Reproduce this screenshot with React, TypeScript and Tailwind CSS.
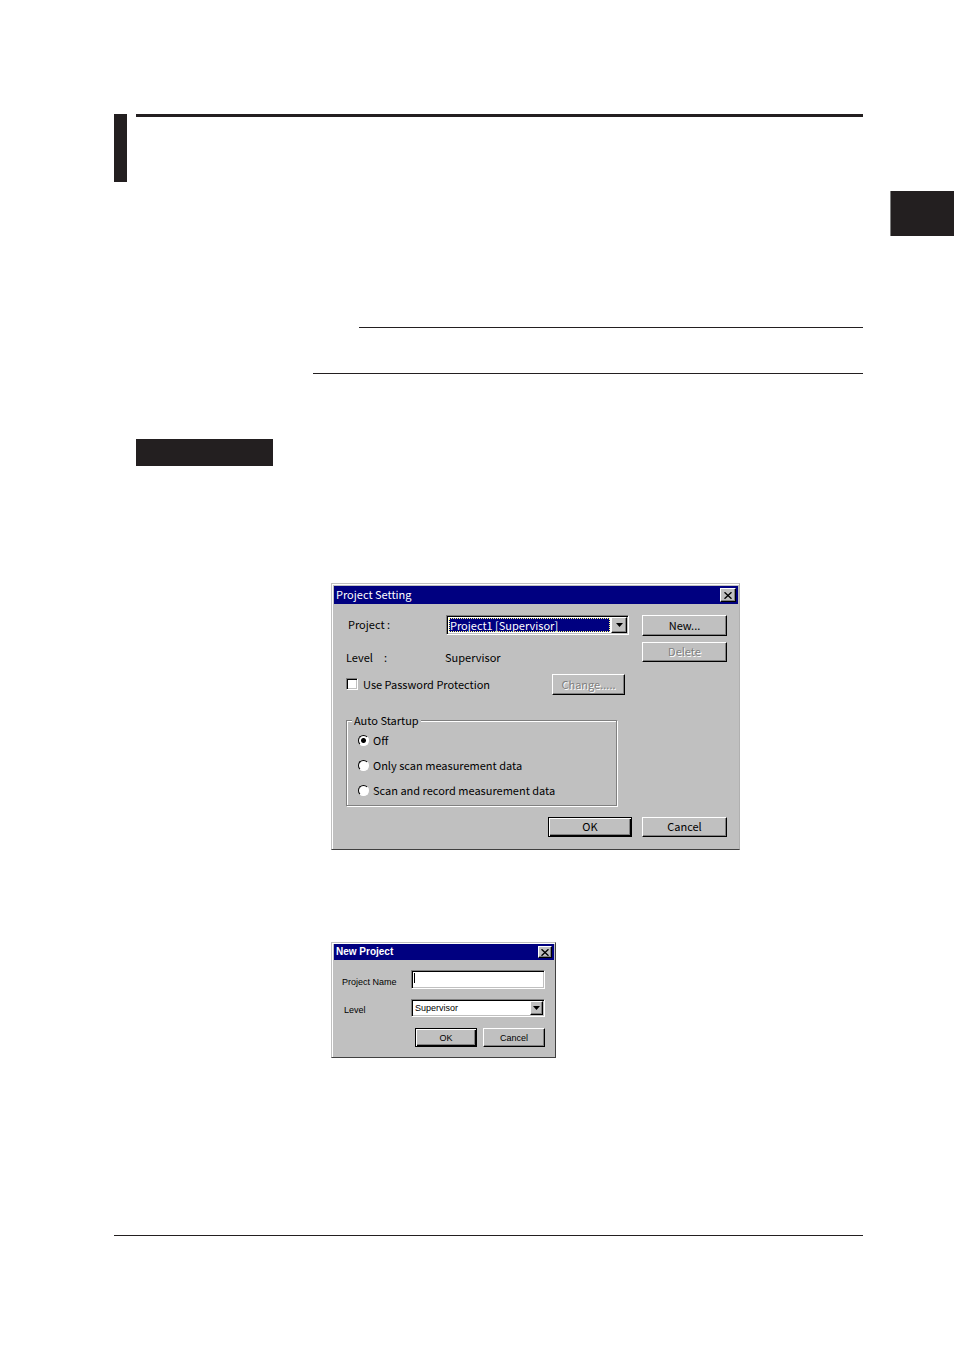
import { useState } from "react";
import type { ReactNode } from "react";
import clsx from "clsx";

type ButtonProps = {
  children: ReactNode;
  isDefault?: boolean;
  disabled?: boolean;
  className?: string;
};

// classic beveled push button
function PushButton({ children, isDefault, disabled, className }: ButtonProps) {
  return (
    <button
      type="button"
      disabled={disabled}
      className={clsx(
        "flex items-center justify-center border bg-[#c0c0c0]",
        isDefault
          ? "border-black shadow-[inset_1px_1px_0_#fff,inset_-1px_-1px_0_#000,inset_-2px_-2px_0_#808080]"
          : "border-t-white border-l-white border-r-black border-b-black shadow-[inset_-1px_-1px_0_#808080]",
        disabled && "text-[#808080] [text-shadow:1px_1px_0_#fff]",
        className
      )}
    >
      {children}
    </button>
  );
}

function TitleBar({ title, small }: { title: string; small?: boolean }) {
  return (
    <header
      className={clsx(
        "flex items-center justify-between bg-[#000080] pl-0.5 text-white",
        small ? "h-4 pr-0.5 text-[10px] font-bold" : "h-[18px] pr-0.5"
      )}
    >
      <h2 className={small ? "" : "pb-0.5"}>{title}</h2>
      <button
        type="button"
        aria-label="Close"
        className={clsx(
          "flex items-center justify-center border border-t-white border-l-white border-r-black border-b-black bg-[#c0c0c0] shadow-[inset_-1px_-1px_0_#808080]",
          small ? "h-3 w-3.5" : "h-3.5 w-4"
        )}
      >
        <svg viewBox="0 0 8 7" className="h-[7px] w-2" stroke="#000" strokeWidth="1.4" fill="none">
          <path d="M0.5 0.3 L7.5 6.7 M7.5 0.3 L0.5 6.7" />
        </svg>
      </button>
    </header>
  );
}

type SelectProps = {
  id: string;
  options: string[];
  focused?: boolean;
  className?: string;
};

function SelectBox({ id, options, focused, className }: SelectProps) {
  return (
    <div
      className={clsx(
        "flex border border-t-[#808080] border-l-[#808080] border-r-white border-b-white bg-white p-px shadow-[inset_1px_1px_0_#000,inset_-1px_-1px_0_#c0c0c0]",
        className
      )}
    >
      <select
        id={id}
        className={clsx(
          "min-w-0 flex-1 appearance-none",
          focused
            ? "bg-[#000080] pl-0.5 text-white shadow-[inset_0_0_0_1px_#fff] outline-1 -outline-offset-2 outline-dotted outline-[#ffff80]"
            : "bg-white pl-0.5 outline-none"
        )}
      >
        {options.map((o) => (
          <option key={o}>{o}</option>
        ))}
      </select>
      <span
        className={clsx(
          "pointer-events-none flex items-center justify-center border border-t-white border-l-white border-r-black border-b-black bg-[#c0c0c0] shadow-[inset_-1px_-1px_0_#808080]",
          focused ? "w-4" : "w-[13px]"
        )}
      >
        <svg viewBox="0 0 7 4" className="h-1 w-[7px]">
          <path d="M0 0 H7 L3.5 4 Z" fill="#000" />
        </svg>
      </span>
    </div>
  );
}

const startupModes = ["Off", "Only scan measurement data", "Scan and record measurement data"];

function ProjectSetting() {
  const [mode, setMode] = useState(startupModes[0]);
  const [usePassword, setUsePassword] = useState(false);

  return (
    <section className="w-[409px] border border-t-[#c0c0c0] border-r-[#b0b0b0] border-b-[#404040] border-l-[#c0c0c0] bg-[#c0c0c0] pt-0.5 pr-px pb-3 pl-0.5 font-['Noto_Sans_CJK_JP','Liberation_Sans',sans-serif] text-[11px] leading-4 shadow-[inset_1px_1px_0_#fff]">
      <TitleBar title="Project Setting" />

      <div className="flex justify-between pt-[11px] pr-[11px] pl-3">
        <div>
          <div className="flex h-5 items-center">
            <label htmlFor="project" className="w-[100px] pb-0.5 pl-0.5">Project :</label>
            <SelectBox id="project" options={["Project1 [Supervisor]"]} focused className="h-5 w-[183px]" />
          </div>
          <div className="mt-[14px] flex h-4">
            <span className="w-[38px]">Level</span>
            <span className="w-[61px]">:</span>
            <span>Supervisor</span>
          </div>
          <div className="mt-[9px] flex h-[21px] items-center justify-between pr-1">
            <label className="flex items-center gap-[5px] pb-0.5">
              <input
                type="checkbox"
                checked={usePassword}
                onChange={(e) => setUsePassword(e.target.checked)}
                className="size-3 appearance-none border border-t-[#808080] border-l-[#808080] border-r-white border-b-white bg-white shadow-[inset_1px_1px_0_#000,inset_-1px_-1px_0_#c0c0c0] checked:bg-black"
              />
              Use Password Protection
            </label>
            <PushButton disabled className="h-[21px] w-[73px] pb-0.5">Change.....</PushButton>
          </div>
        </div>
        <div className="flex flex-col gap-1.5">
          <PushButton className="h-[21px] w-[85px] pb-0.5">New...</PushButton>
          <PushButton disabled className="h-5 w-[85px] pb-0.5">Delete</PushButton>
        </div>
      </div>

      <fieldset className="mt-[17px] ml-3 h-[94px] w-[271px] border border-[#808080] pl-[11px] shadow-[1px_1px_0_#fff,inset_1px_1px_0_#fff]">
        <legend className="-ml-1.5 bg-[#c0c0c0] px-0.5">Auto Startup</legend>
        <div className="flex flex-col gap-[9px] pt-1">
          {startupModes.map((m) => (
            <label key={m} className="flex h-4 items-center gap-1">
              <input
                type="radio"
                name="startup"
                checked={mode === m}
                onChange={() => setMode(m)}
                className="size-[11px] appearance-none rounded-full border border-t-black border-l-black border-r-white border-b-white bg-white checked:bg-[radial-gradient(circle,#000_2px,#fff_3px)]"
              />
              {m}
            </label>
          ))}
        </div>
      </fieldset>

      <div className="mt-[11px] flex justify-end gap-2.5 pr-[11px]">
        <PushButton isDefault className="h-5 w-[84px] pb-0.5">OK</PushButton>
        <PushButton className="h-5 w-[85px] pb-0.5">Cancel</PushButton>
      </div>
    </section>
  );
}

function NewProject() {
  const [name, setName] = useState("");

  return (
    <section className="w-[225px] border border-t-[#c0c0c0] border-r-[#404040] border-b-[#404040] border-l-[#c0c0c0] bg-[#c0c0c0] pt-px pr-px pb-2.5 pl-0.5 font-['Liberation_Sans',sans-serif] text-[9px] leading-3 shadow-[inset_1px_1px_0_#fff]">
      <TitleBar title="New Project" small />

      <div className="flex flex-col pt-[10px] pr-[9px] pl-2">
        <div className="flex items-center justify-between">
          <label htmlFor="project-name" className="pt-1">Project Name</label>
          <div className="relative h-[19px] w-[134px]">
            <input
              id="project-name"
              type="text"
              value={name}
              onChange={(e) => setName(e.target.value)}
              className="size-full border border-t-[#808080] border-l-[#808080] border-r-white border-b-white bg-white pl-0.5 shadow-[inset_1px_1px_0_#000,inset_-1px_-1px_0_#c0c0c0] outline-none"
            />
            {/* resting caret */}
            {name === "" && <span className="pointer-events-none absolute top-[3px] left-[3px] h-2.5 w-px bg-black" />}
          </div>
        </div>
        <div className="mt-2.5 flex items-center justify-between pl-0.5">
          <label htmlFor="level" className="pt-1">Level</label>
          <SelectBox id="level" options={["Supervisor"]} className="h-[18px] w-[134px]" />
        </div>
        <div className="mt-[11px] flex justify-end gap-1.5">
          <PushButton isDefault className="h-[19px] w-[62px]">OK</PushButton>
          <PushButton className="h-[19px] w-[62px]">Cancel</PushButton>
        </div>
      </div>
    </section>
  );
}

export default function App() {
  return (
    <main className="min-h-screen bg-white pt-[114px] pb-[114px] pl-[114px] text-black">
      {/* chapter heading marks */}
      <div className="mr-[91px] flex gap-[9px]">
        <div className="h-[68px] w-[13px] bg-[#231f20]" />
        <div className="h-[3px] flex-1 bg-[#231f20]" />
      </div>

      {/* thumb index on the page edge */}
      <div className="mt-[9px] ml-auto h-[45px] w-16 border-l border-[#808080] bg-[#231f20]" />

      <div className="mr-[91px]">
        {/* note block rules */}
        <hr className="mt-[91px] ml-[245px] border-[#231f20]" />
        <hr className="mt-[45px] ml-[199px] border-[#231f20]" />

        <div className="mt-[65px] ml-[22px] h-[27px] w-[137px] bg-[#231f20]" />

        <div className="mt-[117px] ml-[217px] flex flex-col gap-[92px]">
          <ProjectSetting />
          <NewProject />
        </div>

        <hr className="mt-[177px] border-[#231f20]" />
      </div>
    </main>
  );
}
